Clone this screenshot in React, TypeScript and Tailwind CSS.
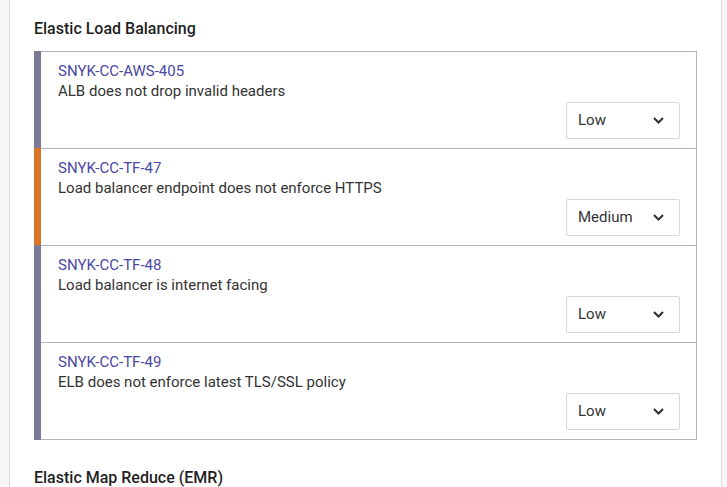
import * as React from "react";

interface Rule {
  id: string;
  title: string;
  severity: "Low" | "Medium" | "High";
}

interface Section {
  name: string;
  rules: Rule[];
}

const sections: Section[] = [
  {
    name: "Elastic Load Balancing",
    rules: [
      { id: "SNYK-CC-AWS-405", title: "ALB does not drop invalid headers", severity: "Low" },
      { id: "SNYK-CC-TF-47", title: "Load balancer endpoint does not enforce HTTPS", severity: "Medium" },
      { id: "SNYK-CC-TF-48", title: "Load balancer is internet facing", severity: "Low" },
      { id: "SNYK-CC-TF-49", title: "ELB does not enforce latest TLS/SSL policy", severity: "Low" },
    ],
  },
  {
    name: "Elastic Map Reduce (EMR)",
    rules: [
      { id: "SNYK-CC-TF-50", title: "EMR cluster does not have encryption enabled", severity: "Medium" },
    ],
  },
];

function Chevron() {
  return (
    <svg className="h-[7px] w-[11px]" viewBox="0 0 11 7" fill="none" stroke="#2f2f2f" strokeWidth={2}>
      <path d="M1 1l4.5 4.5L10 1" />
    </svg>
  );
}

function SeveritySelect({ value }: { value: string }) {
  return (
    <div className="flex h-[37px] w-[114px] items-center justify-between rounded-[2px] border border-[#d6d6de] bg-white pl-[11px] pr-[15px] text-[15px] text-[#333]">
      <span>{value}</span>
      <Chevron />
    </div>
  );
}

function RuleRow({ rule, last }: { rule: Rule; last: boolean }) {
  const bar = rule.severity === "Medium" ? "bg-[#dc7626]" : "bg-[#7b7b97]";
  return (
    <div className="flex">
      <div className={`w-[7px] shrink-0 ${bar}`} />
      <div
        className={`flex flex-1 flex-col border-r border-t border-[#b4b4c0] pb-[9px] pl-[17px] pr-[16px] pt-[9px] ${
          last ? "border-b" : ""
        }`}
      >
        <div className="text-[15px] leading-[20px] text-[#4b48a3]">{rule.id}</div>
        <div className="text-[15px] leading-[21px] text-[#333]">{rule.title}</div>
        <div className="flex justify-end">
          <SeveritySelect value={rule.severity} />
        </div>
      </div>
    </div>
  );
}

export default function App() {
  return (
    <div
      className="h-[487px] overflow-hidden bg-[#f7f7fa]"
      style={{ fontFamily: "Roboto, 'Liberation Sans', sans-serif" }}
    >
      <div className="ml-[9px] flex min-h-full w-[713px] flex-col gap-[26px] border-x border-[#dcdce3] bg-white px-6 pt-[17px]">
        {sections.map((s) => (
          <div key={s.name}>
            <h2 className="mb-[10px] text-[16px] font-medium leading-[24px] text-[#1f1f1f]">{s.name}</h2>
            <div>
              {s.rules.map((r, i) => (
                <RuleRow key={r.id} rule={r} last={i === s.rules.length - 1} />
              ))}
            </div>
          </div>
        ))}
      </div>
    </div>
  );
}
